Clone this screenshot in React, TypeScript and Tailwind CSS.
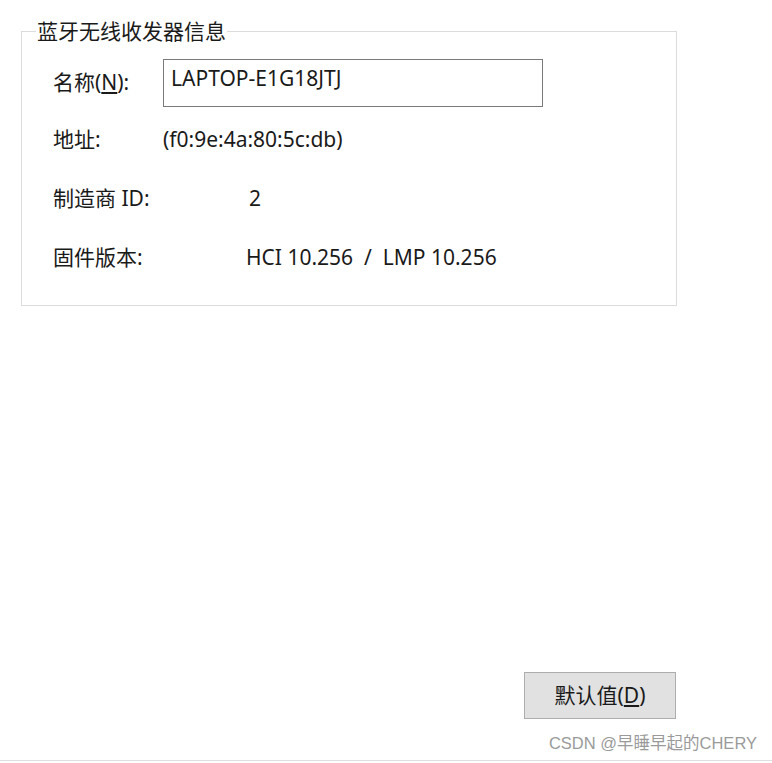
export default function App() {
  const font = { fontFamily: '"Noto Sans", "Noto Sans CJK SC", sans-serif' };
  return (
    <div className="relative w-[772px] h-[763px] bg-white text-[#1a1a1a]" style={font}>
      <div className="pt-[19px] pl-[21px]">
        {/* group box */}
        <fieldset className="w-[656px] h-[287px] border border-[#dcdcdc] m-0 pl-[31px] pr-0 pt-0 pb-0">
          <legend className="ml-[-17px] px-[1px] text-[21px] leading-[24px]">蓝牙无线收发器信息</legend>
          <div className="flex items-center h-[48px] mt-[16px] text-[21px]">
            <span className="w-[110px]">
              名称(<span className="underline underline-offset-2">N</span>):
            </span>
            <div className="w-[380px] h-[48px] border border-[#7a7a7a] pl-[7px] pt-[6px] leading-[24px]">
              LAPTOP-E1G18JTJ
            </div>
          </div>
          <div className="flex items-center h-[24px] mt-[20px] text-[21px] leading-[24px]">
            <span className="w-[110px]">地址:</span>
            <span>(f0:9e:4a:80:5c:db)</span>
          </div>
          <div className="flex items-center h-[24px] mt-[35px] text-[21px] leading-[24px]">
            <span className="w-[196px]">制造商 ID:</span>
            <span>2</span>
          </div>
          <div className="flex items-center h-[24px] mt-[35px] text-[21px] leading-[24px]">
            <span className="w-[193px]">固件版本:</span>
            <span className="whitespace-pre">HCI 10.256  /  LMP 10.256</span>
          </div>
        </fieldset>
      </div>
      <div className="flex justify-end pr-[96px] mt-[366px]">
        <div className="w-[152px] h-[47px] bg-[#e1e1e1] border border-[#adadad] flex items-center justify-center text-[21px]">
          默认值(<span className="underline underline-offset-2">D</span>)
        </div>
      </div>
      <div
        className="flex justify-end pr-[15px] mt-[14px] text-[16.5px] leading-[20px] text-[#9a9a9a]"
        style={{ fontFamily: '"Liberation Sans", "Noto Sans CJK SC", sans-serif' }}
      >
        CSDN @早睡早起的CHERY
      </div>
      <div className="absolute left-0 right-0 bottom-[2px] h-[1px] bg-[#e0e0e0]" />
    </div>
  );
}
